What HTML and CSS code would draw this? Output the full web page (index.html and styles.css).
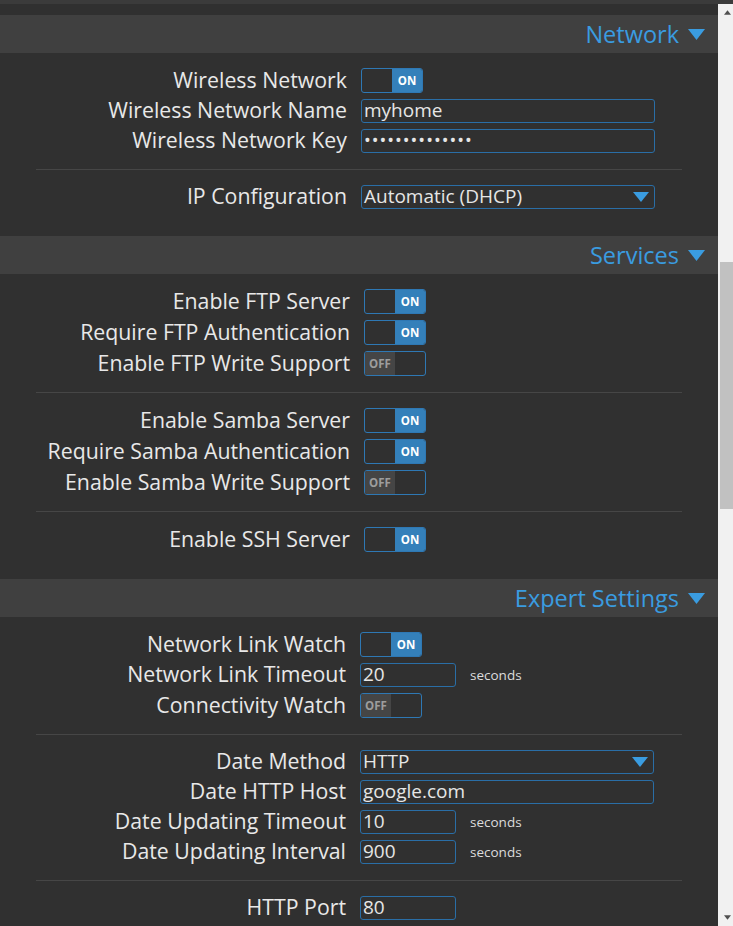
FILE: index.html
```html
<!DOCTYPE html>
<html lang="en">
<head>
<meta charset="utf-8">
<title>Settings</title>
<link rel="stylesheet" href="styles.css">
</head>
<body>
<div class="topbar"></div>
<div class="frame">
  <main class="page">
    <div class="tail"></div>

    <section class="section sec-network">
      <h2 class="section-head">Network <svg class="caret" viewBox="0 0 17 11"><path d="M0 0H17L8.5 11Z"/></svg></h2>
      <div class="section-body">
        <div class="group">
          <label class="lbl">Wireless Network</label>
          <div class="ctl"><span class="toggle on"><span class="half"></span><span class="half fill">ON</span></span></div>
          <label class="lbl">Wireless Network Name</label>
          <div class="ctl"><input class="field wide" type="text" value="myhome"></div>
          <label class="lbl">Wireless Network Key</label>
          <div class="ctl"><input class="field wide pw" type="password" value="secretpassword"></div>
        </div>
        <hr class="sep">
        <div class="group">
          <label class="lbl">IP Configuration</label>
          <div class="ctl"><div class="select wide"><span class="sel-value">Automatic (DHCP)</span><svg class="sel-caret" viewBox="0 0 16 10"><path d="M0 0H16L8 10Z"/></svg></div></div>
        </div>
      </div>
    </section>

    <section class="section sec-services">
      <h2 class="section-head">Services <svg class="caret" viewBox="0 0 17 11"><path d="M0 0H17L8.5 11Z"/></svg></h2>
      <div class="section-body">
        <div class="group">
          <label class="lbl">Enable FTP Server</label>
          <div class="ctl"><span class="toggle on"><span class="half"></span><span class="half fill">ON</span></span></div>
          <label class="lbl">Require FTP Authentication</label>
          <div class="ctl"><span class="toggle on"><span class="half"></span><span class="half fill">ON</span></span></div>
          <label class="lbl">Enable FTP Write Support</label>
          <div class="ctl"><span class="toggle off"><span class="half fill">OFF</span><span class="half"></span></span></div>
        </div>
        <hr class="sep">
        <div class="group">
          <label class="lbl">Enable Samba Server</label>
          <div class="ctl"><span class="toggle on"><span class="half"></span><span class="half fill">ON</span></span></div>
          <label class="lbl">Require Samba Authentication</label>
          <div class="ctl"><span class="toggle on"><span class="half"></span><span class="half fill">ON</span></span></div>
          <label class="lbl">Enable Samba Write Support</label>
          <div class="ctl"><span class="toggle off"><span class="half fill">OFF</span><span class="half"></span></span></div>
        </div>
        <hr class="sep">
        <div class="group">
          <label class="lbl">Enable SSH Server</label>
          <div class="ctl"><span class="toggle on"><span class="half"></span><span class="half fill">ON</span></span></div>
        </div>
      </div>
    </section>

    <section class="section sec-expert">
      <h2 class="section-head">Expert Settings <svg class="caret" viewBox="0 0 17 11"><path d="M0 0H17L8.5 11Z"/></svg></h2>
      <div class="section-body">
        <div class="group">
          <label class="lbl">Network Link Watch</label>
          <div class="ctl"><span class="toggle on"><span class="half"></span><span class="half fill">ON</span></span></div>
          <label class="lbl">Network Link Timeout</label>
          <div class="ctl"><input class="field short" type="text" value="20"><span class="unit">seconds</span></div>
          <label class="lbl">Connectivity Watch</label>
          <div class="ctl"><span class="toggle off"><span class="half fill">OFF</span><span class="half"></span></span></div>
        </div>
        <hr class="sep">
        <div class="group">
          <label class="lbl">Date Method</label>
          <div class="ctl"><div class="select wide"><span class="sel-value">HTTP</span><svg class="sel-caret" viewBox="0 0 16 10"><path d="M0 0H16L8 10Z"/></svg></div></div>
          <label class="lbl">Date HTTP Host</label>
          <div class="ctl"><input class="field wide" type="text" value="google.com"></div>
          <label class="lbl">Date Updating Timeout</label>
          <div class="ctl"><input class="field short" type="text" value="10"><span class="unit">seconds</span></div>
          <label class="lbl">Date Updating Interval</label>
          <div class="ctl"><input class="field short" type="text" value="900"><span class="unit">seconds</span></div>
        </div>
        <hr class="sep">
        <div class="group">
          <label class="lbl">HTTP Port</label>
          <div class="ctl"><input class="field short" type="text" value="80"></div>
        </div>
      </div>
    </section>
  </main>

  <div class="scrollbar">
    <div class="sb-btn"><svg viewBox="0 0 8 5"><path d="M0 5H8L4 0Z"/></svg></div>
    <div class="sb-track"><div class="sb-thumb"></div></div>
    <div class="sb-btn"><svg viewBox="0 0 8 5"><path d="M0 0H8L4 5Z"/></svg></div>
  </div>
</div>
</body>
</html>
```

FILE: styles.css
```css
* { box-sizing: border-box; }

html, body {
  margin: 0;
  padding: 0;
  height: 926px;
  overflow: hidden;
  background: #303030;
  font-family: "Open Sans", "Noto Sans", sans-serif;
  color: #e6e6e6;
}

.topbar {
  height: 4px;
  background: #3b3b3b;
}

.frame {
  display: flex;
  height: 922px;
}

.page {
  flex: 1;
  min-width: 0;
  overflow: hidden;
  background: #303030;
}

.tail { height: 11px; }

.section-head {
  margin: 0;
  height: 38px;
  background: #404040;
  display: flex;
  align-items: center;
  justify-content: flex-end;
  gap: 9px;
  padding-right: 13px;
  padding-bottom: 1px;
  font-size: 23.5px;
  font-weight: 400;
  color: #3a9ce0;
}

.caret {
  width: 17px;
  height: 11px;
  fill: #3a9ce0;
  margin-top: 1px;
}

.section-body {
  padding: 12px 0 24px;
}

.group {
  display: grid;
  grid-template-columns: var(--lw) 1fr;
  column-gap: 13px;
}

.sec-network { --lw: 348px; }
.sec-services { --lw: 351px; }
.sec-expert { --lw: 347px; }

.lbl {
  text-align: right;
  font-size: 21.3px;
  line-height: 26px;
  white-space: nowrap;
  display: flex;
  align-items: center;
  justify-content: flex-end;
  padding-right: 1px;
  padding-bottom: 2px;
  color: #e8e8e8;
}

.ctl {
  display: flex;
  align-items: center;
  padding: 3px 0;
}

.sep {
  margin: 13px 36px 12px;
  border: 0;
  border-top: 1px solid #464646;
  height: 0;
}

/* toggles */
.toggle {
  display: flex;
  width: 62px;
  height: 25px;
  border: 1px solid #2e78b4;
  border-radius: 3px;
  overflow: hidden;
  font-size: 11.5px;
  font-weight: 700;
}

.toggle .half {
  flex: 1;
  display: flex;
  align-items: center;
  justify-content: center;
}

.toggle.on .fill {
  background: #3480ba;
  color: #ffffff;
}

.toggle.off .fill {
  background: #454545;
  color: #9d9d9d;
}

/* inputs */
.field {
  height: 24px;
  border: 1px solid #2a6ea6;
  border-radius: 3px;
  background: #303030;
  color: #e6e6e6;
  font-family: "Open Sans", "Noto Sans", sans-serif;
  font-size: 19px;
  padding: 0 2px 2px;
  outline: none;
}

.wide { width: 294px; }
.short { width: 96px; }

.pw { letter-spacing: 1px; font-size: 18px; }

.unit {
  margin-left: 14px;
  font-size: 13.5px;
  color: #dcdcdc;
}

.select {
  display: flex;
  align-items: center;
  justify-content: space-between;
  height: 24px;
  border: 1px solid #2a6ea6;
  border-radius: 3px;
  background: #303030;
  padding: 0 5px 0 2px;
}

.sel-value {
  font-size: 19px;
  line-height: 22px;
  padding-bottom: 2px;
  color: #e6e6e6;
}

.sel-caret {
  width: 16px;
  height: 10px;
  fill: #3a9ce0;
}

/* scrollbar */
.scrollbar {
  width: 15px;
  background: #f1f1f1;
  display: flex;
  flex-direction: column;
}

.sb-btn {
  height: 17px;
  display: flex;
  align-items: center;
  justify-content: center;
  padding-left: 3px;
}

.sb-btn svg {
  width: 7px;
  height: 5px;
  fill: #505050;
}

.sb-track {
  flex: 1;
  padding-left: 2px;
}

.sb-thumb {
  margin-top: 241px;
  height: 247px;
  background: #c1c1c1;
}
```
